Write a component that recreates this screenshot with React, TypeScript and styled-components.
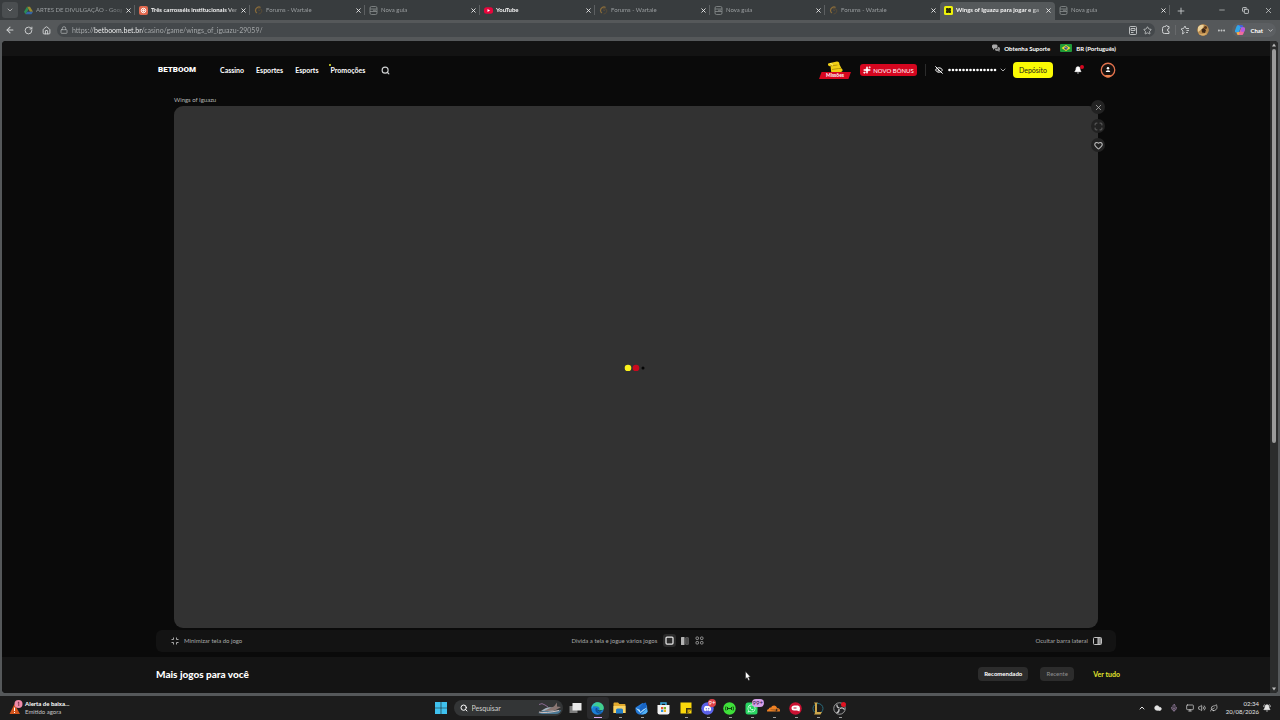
import React from "react";
import styled, { createGlobalStyle } from "styled-components";
import {
  ArrowLeft, RotateCw, House, Lock, Star, Search, X, Plus, Minus, Copy, ChevronDown, ChevronUp,
  Ellipsis, EyeOff, Bell, Heart, Maximize, Mic, Monitor, Volume2,
  Leaf, Cloud, Sparkles, BellRing,
} from "lucide-react";
import { FaDiscord, FaWhatsapp } from "react-icons/fa";
import { SiCloudflare } from "react-icons/si";

const site = `Lato, "Open Sans", sans-serif`;

const GlobalStyle = createGlobalStyle`
  * { box-sizing: border-box; }
  body { margin: 0; background: #1c1c1c; font-family: ${site}; color: #fff; }
  button, input { font: inherit; color: inherit; border: 0; background: none; padding: 0; margin: 0; }
  a { color: inherit; text-decoration: none; }
  svg { display: block; flex: none; }
  h1, h2, p { margin: 0; }
`;

const Desktop = styled.div`
  min-height: 100vh;
  display: flex;
  flex-direction: column;
`;

const Browser = styled.div`
  flex: 1;
  display: flex;
  flex-direction: column;
  background: #55585a;
`;

const TabStrip = styled.div`
  height: 20px;
  display: flex;
  align-items: stretch;
  background: #383c3e;
  padding-left: 2px;
`;

const TabSearch = styled.button`
  width: 16px;
  height: 16px;
  margin: 2px 2px 0 0;
  border-radius: 3px;
  background: #4a4e50;
  display: grid;
  place-items: center;
  color: #d8d8d8;
`;

const Tab = styled.div<{ $active?: boolean; $line?: boolean }>`
  flex: 0 1 115px;
  min-width: 0;
  display: flex;
  align-items: center;
  gap: 3px;
  margin-top: ${(p) => (p.$active ? "2px" : "0")};
  padding: ${(p) => (p.$active ? "0 4px 2px 4px" : "0 4px 0 4px")};
  border-radius: 4px 4px 0 0;
  background: ${(p) => (p.$active ? "#55595b" : "transparent")};
  background-image: ${(p) => (p.$line ? "linear-gradient(#5c5f61, #5c5f61)" : "none")};
  background-size: 1px 10px;
  background-position: right center;
  background-repeat: no-repeat;
`;

const TabTitle = styled.button<{ $bright?: boolean }>`
  flex: 1;
  min-width: 0;
  white-space: nowrap;
  text-align: left;
  font-size: 6px;
  line-height: 10px;
  color: ${(p) => (p.$bright ? "#f4f4f4" : "#9a9ea0")};
  font-weight: ${(p) => (p.$bright ? 700 : 400)};
  mask-image: linear-gradient(90deg, #000 85%, rgba(0, 0, 0, 0.3));
`;

const IconButton = styled.button<{ $size?: number; $color?: string }>`
  width: ${(p) => p.$size ?? 18}px;
  height: ${(p) => p.$size ?? 18}px;
  flex: none;
  display: grid;
  place-items: center;
  color: ${(p) => p.$color ?? "#cfd1d2"};
`;

const StripDivider = styled.span`
  width: 1px;
  height: 10px;
  background: #67696b;
  align-self: center;
`;

const WindowControls = styled.div`
  margin-left: auto;
  display: flex;
  align-items: center;
  gap: 5px;
  padding-right: 3px;
`;

const AddressRow = styled.div`
  height: 20px;
  display: flex;
  align-items: center;
  padding: 0 4px 0 1px;
`;

const AddressField = styled.label`
  flex: 1;
  height: 14px;
  margin: 0 2px;
  padding: 0 1px 0 3px;
  border-radius: 7px;
  background: #44484b;
  color: #b9bcbe;
  display: flex;
  align-items: center;
  gap: 4px;
`;

const AddressInput = styled.input`
  flex: 1;
  min-width: 0;
  height: 12px;
  font-size: 7px;
  outline: none;
  background: linear-gradient(90deg, #aaadaf 0 22px, #ffffff 22px 71px, #aaadaf 71px);
  background-clip: text;
  -webkit-text-fill-color: transparent;
`;

const FieldActions = styled.span`
  display: flex;
`;

const Avatar = styled.button`
  width: 12px;
  height: 12px;
  margin: 0 3px;
  border-radius: 50%;
  overflow: hidden;
`;

const ChatPill = styled.button`
  height: 14px;
  display: flex;
  align-items: center;
  gap: 4px;
  margin-left: 2px;
  padding: 0 2px;
  border-radius: 7px;
  background: #5c5f62;
  font-size: 6px;
  font-weight: 700;
`;

const Viewport = styled.div`
  flex: 1;
  display: flex;
  margin: 1px 2px 3px;
  border-radius: 4px;
  overflow: hidden;
  background: #0a0a0a;
`;

const Page = styled.div`
  flex: 1;
  min-width: 0;
  display: flex;
  flex-direction: column;
`;

const Scrollbar = styled.div`
  width: 8px;
  flex: none;
  background: #2b2c2c;
  display: flex;
  flex-direction: column;
  align-items: center;
  padding: 2px 0;
  gap: 2px;
`;

const ScrollTrack = styled.div`
  flex: 1;
  width: 4px;
`;

const ScrollThumb = styled.div`
  height: 62%;
  border-radius: 2px;
  background: #9a9a9a;
`;

const Container = styled.div`
  width: 100%;
  max-width: 960px;
  margin: 0 auto;
  display: flex;
  align-items: center;
`;

const TopStrip = styled.div`
  height: 15px;
  padding-bottom: 1px;
  background: #131313;
  display: flex;
  font-size: 6px;
  font-weight: 700;
`;

const UtilityLink = styled.a`
  display: flex;
  align-items: center;
  gap: 4px;
  white-space: nowrap;
`;

const Utilities = styled(Container)`
  justify-content: flex-end;
  gap: 10px;
`;

const Header = styled.header`
  height: 28px;
  display: flex;
`;

const Logo = styled.a`
  width: 39px;
  margin: 0 23px 0 2px;
  font-family: Roboto, sans-serif;
  font-size: 8px;
  line-height: 12px;
  font-weight: 900;
`;

const Nav = styled.nav`
  display: flex;
  align-items: center;
  gap: 12px;
  font-size: 7px;
  line-height: 10px;
  font-weight: 700;
`;

const NavLink = styled.a<{ $spark?: boolean }>`
  position: relative;
  &::before {
    content: "";
    display: ${(p) => (p.$spark ? "block" : "none")};
    position: absolute;
    left: -2px;
    top: -1px;
    width: 2px;
    height: 2px;
    border-radius: 50%;
    background: #e8ee2a;
  }
`;

const Actions = styled.div`
  margin-left: auto;
  display: flex;
  align-items: center;
`;

const Missions = styled.a`
  width: 34px;
  display: flex;
  flex-direction: column;
  align-items: center;
`;

const MissionsLabel = styled.span`
  width: 32px;
  height: 7px;
  margin-top: -1px;
  background: #d8061f;
  clip-path: polygon(8% 0, 100% 0, 92% 100%, 0 100%);
  font-size: 5px;
  line-height: 7px;
  font-weight: 700;
  text-align: center;
`;

const BonusButton = styled.button`
  width: 57px;
  height: 12px;
  margin: 0 8px;
  border-radius: 3px;
  background: #d5061f;
  display: flex;
  align-items: center;
  justify-content: center;
  gap: 2px;
  font-size: 6px;
  white-space: nowrap;
`;

const ThinRule = styled.span`
  width: 1px;
  height: 12px;
  background: #2c2c2c;
  margin-right: 9px;
`;

const Balance = styled.button`
  display: flex;
  align-items: center;
  gap: 2px;
`;

const DepositButton = styled.button`
  width: 40px;
  height: 16px;
  margin: 0 16px 0 6px;
  border-radius: 4px;
  background: #fbfb04;
  color: #1a1a1a;
  font-size: 7px;
`;

const NoticeButton = styled.button`
  position: relative;
  width: 18px;
  height: 18px;
  margin-right: 13px;
  display: grid;
  place-items: center;
  &::after {
    content: "";
    position: absolute;
    right: 3px;
    top: 4px;
    width: 4px;
    height: 4px;
    border-radius: 50%;
    background: #d5061f;
  }
`;

const GameArea = styled.main`
  flex: 1;
  width: 100%;
  max-width: 924px;
  margin: 0 auto;
  display: flex;
  flex-direction: column;
`;

const GameTitle = styled.h1`
  height: 22px;
  padding-top: 12px;
  font-size: 6px;
  line-height: 8px;
  font-weight: 400;
  color: #b5b5b5;
`;

const GameStage = styled.section`
  position: relative;
  flex: 1;
  min-height: 300px;
  border-radius: 9px;
  background: #323232;
  display: flex;
  align-items: center;
  justify-content: center;
`;

const StageTools = styled.div`
  position: absolute;
  right: -7px;
  top: -6px;
  display: flex;
  flex-direction: column;
  gap: 5px;
`;

const StageTool = styled.button<{ $dim?: boolean }>`
  width: 14px;
  height: 14px;
  border-radius: 50%;
  background: #222;
  color: ${(p) => (p.$dim ? "#777" : "#b4b4b4")};
  display: grid;
  place-items: center;
`;

const PlayBar = styled.div`
  width: 100%;
  max-width: 960px;
  height: 22px;
  margin: 2px auto 5px;
  padding: 0 14px 1px 15px;
  border-radius: 6px;
  background: #131313;
  display: flex;
  justify-content: space-between;
  align-items: center;
  font-size: 6px;
  color: #a8a8a8;
`;

const BarButton = styled.button`
  display: flex;
  align-items: center;
  gap: 5px;
`;

const SplitGroup = styled.div`
  display: flex;
  align-items: center;
  gap: 2px;
`;

const SplitText = styled.span`
  margin-right: 4px;
`;

const SplitButton = styled.button<{ $on?: boolean }>`
  width: 13px;
  height: 13px;
  border-radius: 3px;
  background: ${(p) => (p.$on ? "#2b2b2b" : "transparent")};
  color: ${(p) => (p.$on ? "#e6e6e6" : "#999")};
  display: grid;
  place-items: center;
`;

const MoreGames = styled.section`
  height: 36px;
  padding-bottom: 3px;
  background: #141414;
  display: flex;
`;

const MoreRow = styled(Container)`
  max-width: 968px;
  padding-left: 4px;
`;

const SectionTitle = styled.h2`
  font-size: 10px;
  line-height: 14px;
  font-weight: 900;
`;

const Filters = styled.div`
  margin-left: auto;
  display: flex;
  align-items: center;
  gap: 12px;
`;

const Chip = styled.button<{ $on?: boolean }>`
  height: 14px;
  width: ${(p) => (p.$on ? "50px" : "34px")};
  border-radius: 4px;
  background: #2c2c2c;
  font-size: 6px;
  font-weight: ${(p) => (p.$on ? 700 : 400)};
  color: ${(p) => (p.$on ? "#fff" : "#8f8f8f")};
`;

const SeeAll = styled.a`
  margin-left: 7px;
  font-size: 7px;
  font-weight: 700;
  color: #e2e62e;
`;

const Taskbar = styled.footer`
  height: 24px;
  background: #1c1c1c;
  display: grid;
  grid-template-columns: 1fr auto 1fr;
  align-items: center;
`;

const Widget = styled.button`
  display: flex;
  align-items: center;
  gap: 2px;
  padding-left: 9px;
  text-align: left;
  font-size: 6px;
  line-height: 8px;
  color: #c4c4c4;
`;

const Strong = styled.strong`
  display: block;
  font-weight: 700;
  color: #fff;
`;

const Apps = styled.div`
  display: flex;
  align-items: center;
`;

const AppButton = styled.button<{ $state?: "open" | "active" }>`
  position: relative;
  width: 22px;
  height: 22px;
  display: grid;
  place-items: center;
  border-radius: 3px;
  background: ${(p) => (p.$state === "active" ? "#2a2a2c" : "transparent")};
  &::after {
    content: "";
    display: ${(p) => (p.$state ? "block" : "none")};
    position: absolute;
    bottom: 1px;
    left: 50%;
    width: ${(p) => (p.$state === "active" ? "8px" : "3px")};
    margin-left: ${(p) => (p.$state === "active" ? "-4px" : "-1px")};
    height: 1px;
    background: ${(p) => (p.$state === "active" ? "#d9a9ee" : "#9b9b9b")};
  }
`;

const Badge = styled.span<{ $tone: string; $ink?: string }>`
  position: absolute;
  left: 11px;
  top: 2px;
  height: 8px;
  padding: 0 1px;
  border-radius: 4px;
  background: ${(p) => p.$tone};
  color: ${(p) => p.$ink ?? "#fff"};
  font-size: 6px;
  line-height: 8px;
`;

const SearchBox = styled.label`
  width: 109px;
  height: 16px;
  margin: 0 2px;
  padding: 0 1px 0 6px;
  border-radius: 8px;
  background: #333536;
  display: flex;
  align-items: center;
  gap: 4px;
`;

const SearchInput = styled.input`
  flex: 1;
  min-width: 0;
  font-size: 7px;
  outline: none;
  &::placeholder { color: #d2d2d2; opacity: 1; }
`;

const Tray = styled.div`
  justify-self: end;
  display: flex;
  align-items: center;
  color: #e4e4e4;
  padding-right: 9px;
`;

const TrayGroup = styled.div`
  display: flex;
  align-items: center;
  gap: 4px;
  margin-left: 8px;
`;

const TrayLead = styled.div`
  display: flex;
  align-items: center;
  gap: 8px;
`;

const Clock = styled.time`
  margin: 0 4px 0 8px;
  text-align: right;
  font-size: 6px;
  line-height: 8px;
`;

const Pointer = styled.svg`
  position: fixed;
  left: 58.2%;
  top: 671px;
  pointer-events: none;
`;

const DriveIcon = () => (
  <svg width="9" height="9" viewBox="0 0 24 22">
    <path d="M8 1h8l8 13h-8z" fill="#9b8a2e" />
    <path d="M8 1l4 7-8 13-4-7z" fill="#2c8d55" />
    <path d="M8 14h16l-4 7H4z" fill="#3465a6" />
  </svg>
);
const DocIcon = () => (
  <svg width="9" height="9" viewBox="0 0 18 18">
    <rect width="18" height="18" rx="4" fill="#e2694f" />
    <circle cx="9" cy="9" r="4.5" fill="none" stroke="#fff" strokeWidth="2" />
    <path d="M9 6v6M6 9h6" stroke="#fff" strokeWidth="1.5" />
  </svg>
);
const WartaleIcon = () => (
  <svg width="9" height="9" viewBox="0 0 18 18" fill="none">
    <path d="M13 3C9 0 3 4 3 9c0 2 1 4 3 5" stroke="#8a6c3a" strokeWidth="2.5" />
    <path d="M7 5l7 1 2 4-3 5-4 1M8 8l4 1" stroke="#574a35" strokeWidth="2" />
  </svg>
);
const NewTabIcon = () => (
  <svg width="9" height="9" viewBox="0 0 18 18" fill="none" stroke="#8b8f91" strokeWidth="1.6">
    <rect x="2" y="1" width="14" height="16" rx="3" />
    <path d="M2 6h14M2 11h14M8 8.500h6" />
  </svg>
);
const YoutubeIcon = () => (
  <svg width="9" height="9" viewBox="0 0 18 18">
    <rect y="2.500" width="18" height="13" rx="5" fill="#e8063c" />
    <path d="M7 6l5 3-5 3z" fill="#fff" />
  </svg>
);
const BoomIcon = () => (
  <svg width="9" height="9" viewBox="0 0 18 18">
    <rect width="18" height="18" rx="3" fill="#eef20a" />
    <path d="M5 4h3l1 1 1-1h3l1 1v3l-1 1 1 1v3l-1 1h-3l-1-1-1 1H5l-1-1v-3l1-1-1-1V5z" fill="#2b2d08" />
  </svg>
);
const ReaderIcon = () => (
  <svg width="8" height="9" viewBox="0 0 16 18" fill="none" stroke="currentColor" strokeWidth="1.700">
    <rect x="1" y="1" width="14" height="16" rx="2" />
    <path d="M4 5h8v4H4zM4 13h5" />
  </svg>
);
const ExtensionIcon = () => (
  <svg width="10" height="10" viewBox="0 0 20 20" fill="none" stroke="currentColor" strokeWidth="2">
    <path d="M7 3h2q0-2 2-2t2 2h3v4q-3 0-3 3t3 3v4H7q-4 0-4-4V7q0-4 4-4z" />
  </svg>
);
const CollectionsIcon = () => (
  <svg width="10" height="10" viewBox="0 0 20 20" fill="none" stroke="currentColor" strokeWidth="1.800">
    <path d="M9 15l-4 3 1-6-4-4 5-1 3-5 2 5h6M13 11h5M12 15h4" />
  </svg>
);
const ChatIcon = () => (
  <svg width="8" height="8" viewBox="0 0 16 16">
    <path d="M2 1h7l2 2v4L9 9H5l-3 3V9L0 7V3z" fill="#a9a9a9" />
    <path d="M12 6h2l2 2v4l-1 1v3l-3-2H8l-2-2v-2h4l2-2z" fill="#8c8c8c" />
  </svg>
);
const FlagBrazil = () => (
  <svg width="12" height="8" viewBox="0 0 24 16">
    <rect width="24" height="16" rx="2" fill="#1f9a38" />
    <path d="M12 2l9 6-9 6-9-6z" fill="#f4e32c" />
    <circle cx="12" cy="8" r="3.600" fill="#23407c" />
    <path d="M9 7q3-.5 6 2" stroke="#fff" fill="none" />
  </svg>
);
const ScrollIcon = () => (
  <svg width="18" height="12" viewBox="0 0 36 24">
    <path d="M4 8q-1-4 4-4l14-3q5 0 5 6l4 8q3 1 2 5-2 3-7 2l-13 1q-4-1-3-5L9 10q-4 1-5-2z" fill="#f0cf16" />
    <path d="M9 10l14-2M12 17l13-2 6 0" stroke="#a88405" strokeWidth="1.500" fill="none" />
    <path d="M8 5q5 0 5 4" stroke="#fff17a" strokeWidth="2" fill="none" />
  </svg>
);
const HiddenAmount = () => (
  <svg width="52" height="4" viewBox="0 0 104 8" fill="#fff">
    {Array.from({ length: 14 }, (_, i) => <circle key={i} cx={9 + i * 7} cy="4" r="2.600" />)}
  </svg>
);
const AvatarArt = () => (
  <svg width="12" height="12" viewBox="0 0 24 24">
    <circle cx="12" cy="12" r="12" fill="#b98a4c" />
    <path d="M2 6Q8-1 14 3l-4 7-8 6z" fill="#ead09a" />
    <path d="M9 11l4-3 5 4-2 6-6-1z" fill="#3b2718" />
    <circle cx="17" cy="7" r="3" fill="#5a3517" />
    <path d="M3 18q8 4 17-1l-4 6H8z" fill="#d8ac68" />
  </svg>
);
const CopilotIcon = () => (
  <svg width="12" height="12" viewBox="0 0 24 24">
    <path d="M8 2h7q3 0 4 5l-6 1-3 8-1 1H4q-3 0-2-4L5 5q1-3 3-3z" fill="#31a5e8" />
    <path d="M8 2h7q3 0 4 5h-5q-2-4-6-5z" fill="#4a59df" />
    <path d="M16 22H9q-3 0-4-5l6-1 3-8 1-1h5q3 0 2 4l-3 8q-1 3-3 3z" fill="#ee6b9d" />
    <path d="M15 7h5q3 0 2 4l-2 5-7-1z" fill="#b35ae0" />
    <path d="M5 17l6-1-1 6q-4 0-5-5z" fill="#f0b93c" />
  </svg>
);
const ProfileIcon = () => (
  <svg width="16" height="16" viewBox="0 0 32 32">
    <circle cx="16" cy="16" r="13.500" fill="#15100e" stroke="#e0714c" strokeWidth="2.600" />
    <circle cx="16" cy="12.500" r="2.500" fill="#fff" />
    <path d="M11.500 20q0-3.500 4.500-3.500t4.500 3.500z" fill="#fff" />
    <path d="M10 26h12l-3 5h-6z" fill="#e9824f" />
  </svg>
);
const Loader = () => (
  <svg width="24" height="8" viewBox="0 0 24 8">
    <circle cx="4" cy="5" r="3.300" fill="#fbf21c" />
    <circle cx="12" cy="5" r="3.300" fill="#c90a1e" />
    <circle cx="19" cy="5" r="1.500" fill="#050505" />
  </svg>
);
const MinimizeIcon = () => (
  <svg width="8" height="8" viewBox="0 0 16 16" fill="none" stroke="currentColor" strokeWidth="2">
    <path d="M1 5h4V1M11 1v4h4M15 11h-4v4M5 15v-4H1" />
  </svg>
);
const SidebarIcon = () => (
  <svg width="9" height="8" viewBox="0 0 18 16">
    <rect x="1" y="1" width="16" height="14" rx="2" fill="none" stroke="#c0c0c0" strokeWidth="2" />
    <path d="M10 2h6v12h-6z" fill="#8d8d8d" />
    <path d="M10 1v14" stroke="#c0c0c0" strokeWidth="2" />
  </svg>
);
const FourIcon = () => (
  <svg width="9" height="9" viewBox="0 0 18 18" fill="none" stroke="currentColor" strokeWidth="2">
    <rect x="2" y="2" width="5" height="5" rx="1.500" />
    <rect x="11" y="2" width="5" height="5" rx="1.500" />
    <rect x="2" y="11" width="5" height="5" rx="1.500" />
    <rect x="11" y="11" width="5" height="5" rx="1.500" />
  </svg>
);
const TwoIcon = () => (
  <svg width="8" height="8" viewBox="0 0 16 16">
    <rect x="0" y="0" width="7" height="16" rx="1" fill="#b4b4b4" />
    <rect x="9" y="1" width="6" height="14" rx="1" fill="#4a4a4a" stroke="#777" />
  </svg>
);
const OneIcon = () => (
  <svg width="9" height="9" viewBox="0 0 18 18">
    <rect x="2" y="2" width="14" height="14" rx="2" fill="none" stroke="currentColor" strokeWidth="2.500" />
  </svg>
);
const AlertIcon = () => (
  <svg width="14" height="16" viewBox="0 0 28 32">
    <path d="M11 8L22 28H1z" fill="#d3541c" />
    <path d="M11 15v7M11 24v2" stroke="#fff" strokeWidth="2" />
    <circle cx="19" cy="8" r="8" fill="#f08aa9" />
    <path d="M17.500 5.500L19.500 4v8" stroke="#53202f" strokeWidth="1.500" fill="none" />
  </svg>
);
const WindowsIcon = () => (
  <svg width="12" height="12" viewBox="0 0 12 12" fill="#3fc1ee">
    <path d="M0 0h5.700v5.700H0zM6.300 0H12v5.700H6.300zM0 6.300h5.700V12H0zM6.300 6.300H12V12H6.300z" />
  </svg>
);
const WhaleIcon = () => (
  <svg width="25" height="14" viewBox="0 0 50 28">
    <path d="M2 24q10-6 22-5t24-1q-2 8-10 8H10z" fill="#4a7894" />
    <path d="M8 20Q20 10 30 13l8-3 2 5-8 5z" fill="#a5b4bf" />
    <path d="M14 20q10-6 20-9l6-8 0 8 8 1-12 7z" fill="#8a7672" />
    <path d="M4 7q6-4 12 1l6 4" stroke="#8a6a92" strokeWidth="2" fill="none" />
    <path d="M4 22q14 3 40-3" stroke="#d8c3c0" strokeWidth="2" fill="none" />
  </svg>
);
const TaskViewIcon = () => (
  <svg width="13" height="12" viewBox="0 0 26 24">
    <rect x="1" y="8" width="16" height="14" fill="#7b7b7b" />
    <rect x="7" y="2" width="18" height="15" fill="#e9e9e9" />
  </svg>
);
const EdgeIcon = () => (
  <svg width="13" height="13" viewBox="0 0 26 26">
    <circle cx="13" cy="13" r="12.500" fill="#1b7fd6" />
    <path d="M1 11C3 3 9 0 14 .500c7 .5 12 6 11.500 12C25 17 20 18 16 17c3-4 0-8-4-8C7 8 3 9 1 11z" fill="#42cf8c" />
    <path d="M1 11C3 4 9 2 13 4c-6 0-10 4-10 9z" fill="#2bb3e8" />
    <path d="M10 12c-3 4 0 11 7 11 3 0 5-1 6-3-5 2-10 0-11-4-.4-2 0-3 1-4z" fill="#124f9e" />
    <path d="M12.500 11.500c-1.500 3 1 5.500 4 5.500l7-1-5 3c-5 0-8-4-6-7.500z" fill="#0d2e4d" />
  </svg>
);
const FolderIcon = () => (
  <svg width="13" height="12" viewBox="0 0 26 24">
    <path d="M1 3q0-2 2-2h7l3 3h10q2 0 2 2v16H1z" fill="#e2a92c" />
    <path d="M1 8h24v14H1z" fill="#f9d467" />
    <path d="M6 16q0-3 3-3h8q3 0 3 3v7H6z" fill="#2680c9" />
  </svg>
);
const MailIcon = () => (
  <svg width="13" height="13" viewBox="0 0 26 26">
    <path d="M1 11L15 2l9 5 1 13q-3 5-9 5H8q-6-2-7-9z" fill="#2379d8" />
    <path d="M1 12l10 4L24 8v4L11 22z" fill="#b5e0fa" />
    <path d="M22 1q-8 1-13 12l2 7q4-6 13-9z" fill="#1764c4" />
    <path d="M12 25l12-12 1 6q-2 6-13 6z" fill="#53b2f5" />
  </svg>
);
const StoreIcon = () => (
  <svg width="13" height="13" viewBox="0 0 26 26">
    <path d="M8 7V2h10v5" fill="none" stroke="#39a9e0" strokeWidth="3" />
    <path d="M1 6h24v15q0 4-4 4H5q-4 0-4-4z" fill="#f3f3f3" />
    <path d="M8 10h4.500v4.500H8z" fill="#e5532d" /><path d="M13.500 10H18v4.500h-4.500z" fill="#73b32c" />
    <path d="M8 15.500h4.500V20H8z" fill="#2997dd" /><path d="M13.500 15.500H18V20h-4.500z" fill="#f3b51c" />
  </svg>
);
const NotesIcon = () => (
  <svg width="12" height="12" viewBox="0 0 24 24">
    <path d="M1 1h22v22H1z" fill="#fbd80c" />
    <path d="M12 12h11v3l-8 8h-3z" fill="#3d3712" />
    <path d="M15 15h8l-8 8z" fill="#d8a90a" />
  </svg>
);
const DiscordIcon = () => (
  <svg width="13" height="13" viewBox="0 0 26 26">
    <circle cx="13" cy="13" r="12.500" fill="#5b62e8" />
    <FaDiscord x="5" y="5" size={16} color="#fff" />
  </svg>
);
const RadioIcon = () => (
  <svg width="13" height="13" viewBox="0 0 26 26">
    <circle cx="13" cy="13" r="12.500" fill="#3fe03a" />
    <path d="M6 9q-2 4 0 8M9 10v6M20 9q2 4 0 8M17 10v6M9 13h8" stroke="#12470f" strokeWidth="2" fill="none" />
  </svg>
);
const WhatsIcon = () => (
  <svg width="13" height="13" viewBox="0 0 26 26">
    <rect x="1" y="1" width="24" height="24" rx="5" fill="#29d562" />
    <FaWhatsapp x="4" y="4" size={18} color="#e9fff0" />
  </svg>
);
const CloudIcon = () => <SiCloudflare size={13} color="#ee8124" />;
const RedIcon = () => (
  <svg width="13" height="13" viewBox="0 0 26 26">
    <circle cx="13" cy="13" r="12.500" fill="#cb1132" />
    <path d="M5 12q0-5 6-5h7q4 1 4 6l-1 6-5-2h-6q-5 0-5-5z" fill="#fff" />
    <path d="M9 11h6v2H9z" fill="#cb1132" />
  </svg>
);
const LeagueIcon = () => (
  <svg width="13" height="13" viewBox="0 0 26 26">
    <circle cx="14" cy="13" r="10" fill="none" stroke="#276b7d" strokeWidth="2" />
    <path d="M6 1h8l-2 2v17h10l-3 5H6l2-3V4z" fill="#cda74d" />
  </svg>
);
const ObsIcon = () => (
  <svg width="13" height="13" viewBox="0 0 26 26">
    <circle cx="13" cy="13" r="11.500" fill="#202022" stroke="#b7b7b7" strokeWidth="1.600" />
    <path d="M13 12q-6-1-5-7M14 13q5-3 9 2M12 14q1 6-5 8" stroke="#c9c9c9" strokeWidth="2.500" fill="none" />
    <circle cx="21" cy="5" r="5" fill="#e01422" />
  </svg>
);
const Triangle = ({ down }: { down?: boolean }) => (
  <svg width="4" height="4" viewBox="0 0 8 8" fill="#bdbdbd">
    <path d={down ? "M0 1h8L4 7z" : "M0 7h8L4 1z"} />
  </svg>
);

const tabs = [
  { title: "ARTES DE DIVULGAÇÃO - Googl", icon: <DriveIcon /> },
  { title: "Três carrosséis institucionais Vert", icon: <DocIcon />, bright: true },
  { title: "Forums - Wartale", icon: <WartaleIcon /> },
  { title: "Nova guia", icon: <NewTabIcon /> },
  { title: "YouTube", icon: <YoutubeIcon />, bright: true },
  { title: "Forums - Wartale", icon: <WartaleIcon /> },
  { title: "Nova guia", icon: <NewTabIcon /> },
  { title: "Forums - Wartale", icon: <WartaleIcon /> },
  { title: "Wings of Iguazu para jogar e ga", icon: <BoomIcon />, bright: true, active: true },
  { title: "Nova guia", icon: <NewTabIcon /> },
];

const apps: { name: string; icon: React.ReactNode; state?: "open" | "active"; badge?: React.ReactNode }[] = [
  { name: "Visão de tarefas", icon: <TaskViewIcon /> },
  { name: "Edge", icon: <EdgeIcon />, state: "active" },
  { name: "Explorador", icon: <FolderIcon />, state: "open" },
  { name: "E-mail", icon: <MailIcon />, state: "open" },
  { name: "Store", icon: <StoreIcon /> },
  { name: "Notas", icon: <NotesIcon />, state: "open" },
  { name: "Discord", icon: <DiscordIcon />, state: "open", badge: <Badge $tone="#e0424a">9+</Badge> },
  { name: "Rádio", icon: <RadioIcon />, state: "open" },
  { name: "WhatsApp", icon: <WhatsIcon />, state: "open", badge: <Badge $tone="#d6a0ea" $ink="#35183f">99+</Badge> },
  { name: "Cloudflare", icon: <CloudIcon />, state: "open" },
  { name: "Riot", icon: <RedIcon />, state: "open" },
  { name: "League", icon: <LeagueIcon />, state: "open" },
  { name: "OBS", icon: <ObsIcon />, state: "open" },
];

export default function App() {
  return (
    <Desktop>
      <GlobalStyle />
      <Browser>
        <TabStrip>
          <TabSearch aria-label="Pesquisar guias"><ChevronDown size={8} /></TabSearch>
          {tabs.map((t, i) => (
            <Tab key={i} $active={t.active} $line={!t.active && !tabs[i + 1]?.active}>
              {t.icon}
              <TabTitle $bright={t.bright}>{t.title}</TabTitle>
              <IconButton $size={6} $color="#f0f0f0" aria-label="Fechar guia"><X size={7} strokeWidth={3} /></IconButton>
            </Tab>
          ))}
          <IconButton $size={22} aria-label="Nova guia"><Plus size={10} /></IconButton>
          <WindowControls>
            <IconButton aria-label="Minimizar"><Minus size={8} /></IconButton>
            <IconButton aria-label="Restaurar"><Copy size={7} strokeWidth={3} /></IconButton>
            <IconButton aria-label="Fechar"><X size={9} /></IconButton>
          </WindowControls>
        </TabStrip>
        <AddressRow>
          <IconButton aria-label="Voltar"><ArrowLeft size={10} strokeWidth={2.5} /></IconButton>
          <IconButton aria-label="Atualizar"><RotateCw size={9} strokeWidth={2.5} /></IconButton>
          <IconButton aria-label="Início"><House size={9} strokeWidth={2.5} /></IconButton>
          <AddressField>
            <Lock size={8} />
            <AddressInput aria-label="Endereço" defaultValue="https://betboom.bet.br/casino/game/wings_of_iguazu-29059/" />
            <FieldActions>
              <IconButton $size={14} aria-label="Leitor"><ReaderIcon /></IconButton>
              <IconButton $size={14} aria-label="Favoritar"><Star size={9} /></IconButton>
            </FieldActions>
          </AddressField>
          <IconButton aria-label="Extensões"><ExtensionIcon /></IconButton>
          <StripDivider />
          <IconButton aria-label="Favoritos"><CollectionsIcon /></IconButton>
          <Avatar aria-label="Perfil"><AvatarArt /></Avatar>
          <IconButton aria-label="Mais"><Ellipsis size={9} strokeWidth={3} /></IconButton>
          <ChatPill><CopilotIcon />Chat<ChevronDown size={7} /></ChatPill>
        </AddressRow>

        <Viewport>
          <Page>
            <TopStrip>
              <Utilities>
                <UtilityLink href="#suporte"><ChatIcon />Obtenha Suporte</UtilityLink>
                <UtilityLink href="#idioma"><FlagBrazil />BR (Português)</UtilityLink>
              </Utilities>
            </TopStrip>
            <Header>
              <Container>
                <Logo href="#inicio">BETBOOM</Logo>
                <Nav>
                  <NavLink href="#cassino">Cassino</NavLink>
                  <NavLink href="#esportes">Esportes</NavLink>
                  <NavLink href="#esports">Esports</NavLink>
                  <NavLink href="#promocoes" $spark>Promoções</NavLink>
                  <IconButton $size={16} aria-label="Buscar"><Search size={9} strokeWidth={3} /></IconButton>
                </Nav>
                <Actions>
                  <Missions href="#missoes"><ScrollIcon /><MissionsLabel>Missões</MissionsLabel></Missions>
                  <BonusButton><Sparkles size={8} fill="#fff" />NOVO BÔNUS</BonusButton>
                  <ThinRule />
                  <Balance aria-label="Saldo oculto"><EyeOff size={8} strokeWidth={3} /><HiddenAmount /><ChevronDown size={8} /></Balance>
                  <DepositButton>Depósito</DepositButton>
                  <NoticeButton aria-label="Notificações"><Bell size={8} fill="#fff" /></NoticeButton>
                  <IconButton $size={16} aria-label="Conta"><ProfileIcon /></IconButton>
                </Actions>
              </Container>
            </Header>
            <GameArea>
              <GameTitle>Wings of Iguazu</GameTitle>
              <GameStage>
                <Loader />
                <StageTools>
                  <StageTool aria-label="Fechar jogo"><X size={9} /></StageTool>
                  <StageTool $dim aria-label="Tela cheia"><Maximize size={9} /></StageTool>
                  <StageTool aria-label="Favorito"><Heart size={9} strokeWidth={3} /></StageTool>
                </StageTools>
              </GameStage>
            </GameArea>
            <PlayBar>
              <BarButton><MinimizeIcon />Minimizar tela do jogo</BarButton>
              <SplitGroup>
                <SplitText>Divida a tela e jogue vários jogos</SplitText>
                <SplitButton $on aria-label="Um jogo"><OneIcon /></SplitButton>
                <SplitButton aria-label="Dois jogos"><TwoIcon /></SplitButton>
                <SplitButton aria-label="Quatro jogos"><FourIcon /></SplitButton>
              </SplitGroup>
              <BarButton>Ocultar barra lateral<SidebarIcon /></BarButton>
            </PlayBar>
            <MoreGames>
              <MoreRow>
                <SectionTitle>Mais jogos para você</SectionTitle>
                <Filters>
                  <Chip $on>Recomendado</Chip>
                  <Chip>Recente</Chip>
                  <SeeAll href="#todos">Ver tudo</SeeAll>
                </Filters>
              </MoreRow>
            </MoreGames>
          </Page>
          <Scrollbar>
            <Triangle />
            <ScrollTrack><ScrollThumb /></ScrollTrack>
            <Triangle down />
          </Scrollbar>
        </Viewport>
      </Browser>

      <Taskbar>
        <Widget><AlertIcon /><span><Strong>Alerta de baixa...</Strong>Emitido agora</span></Widget>
        <Apps>
          <AppButton aria-label="Iniciar"><WindowsIcon /></AppButton>
          <SearchBox>
            <Search size={8} strokeWidth={3} />
            <SearchInput aria-label="Pesquisar" placeholder="Pesquisar" />
            <WhaleIcon />
          </SearchBox>
          {apps.map((a) => (
            <AppButton key={a.name} aria-label={a.name} $state={a.state}>{a.icon}{a.badge}</AppButton>
          ))}
        </Apps>
        <Tray>
          <TrayLead><ChevronUp size={8} strokeWidth={3} /><Cloud size={8} fill="#e4e4e4" /><Mic size={8} color="#b99bc6" /></TrayLead>
          <TrayGroup><Monitor size={8} /><Volume2 size={8} /><Leaf size={8} /></TrayGroup>
          <Clock>02:34<br />20/08/2026</Clock>
          <BellRing size={8} fill="#e4e4e4" />
        </Tray>
      </Taskbar>
      <Pointer width="6" height="10" viewBox="0 0 12 20">
        <path d="M1 1v15l3-3 3 6 2.500-1L7 12h4z" fill="#fff" stroke="#222" />
      </Pointer>
    </Desktop>
  );
}
